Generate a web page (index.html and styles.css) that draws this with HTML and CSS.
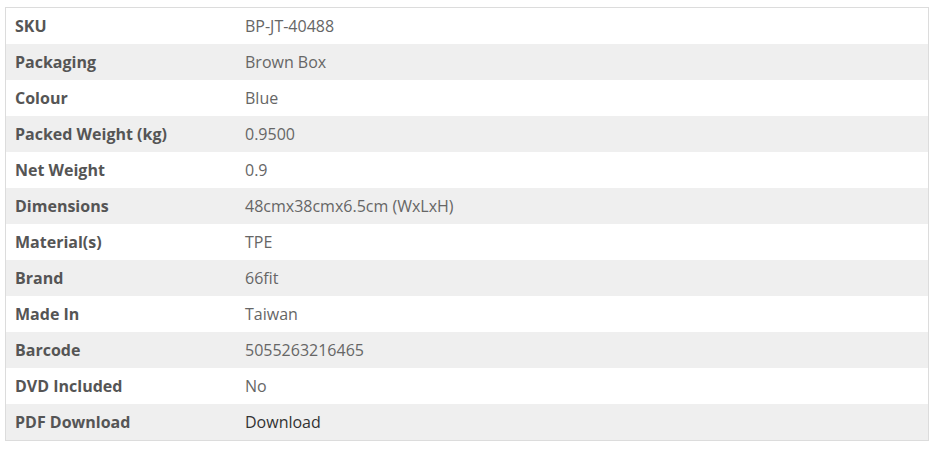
FILE: index.html
```html
<!DOCTYPE html>
<html>
<head>
<meta charset="utf-8">
<link rel="stylesheet" href="styles.css">
</head>
<body>
<table class="specs">
<tbody>
<tr><th>SKU</th><td>BP-JT-40488</td></tr>
<tr><th>Packaging</th><td>Brown Box</td></tr>
<tr><th>Colour</th><td>Blue</td></tr>
<tr><th>Packed Weight (kg)</th><td>0.9500</td></tr>
<tr><th>Net Weight</th><td>0.9</td></tr>
<tr><th>Dimensions</th><td>48cmx38cmx6.5cm (WxLxH)</td></tr>
<tr><th>Material(s)</th><td>TPE</td></tr>
<tr><th>Brand</th><td>66fit</td></tr>
<tr><th>Made In</th><td>Taiwan</td></tr>
<tr><th>Barcode</th><td>5055263216465</td></tr>
<tr><th>DVD Included</th><td>No</td></tr>
<tr><th>PDF Download</th><td><a class="link" href="#">Download</a></td></tr>
</tbody>
</table>
</body>
</html>
```
FILE: styles.css
```css
body {
  margin: 7px 0 0 5px;
  background: #fff;
  font-family: "Open Sans", "Liberation Sans", sans-serif;
  font-size: 16px;
}
.specs {
  width: 924px;
  border-collapse: collapse;
  border: 1px solid #dcdcdc;
}
.specs tr:nth-child(even) {
  background: #efefef;
}
.specs th, .specs td {
  height: 36px;
  padding: 0 9px;
  text-align: left;
  vertical-align: middle;
  line-height: 20px;
}
.specs th {
  width: 212px;
  font-weight: 700;
  color: #555;
}
.specs td {
  font-weight: 400;
  color: #666;
}
.link {
  color: #333;
  text-decoration: none;
}
```
